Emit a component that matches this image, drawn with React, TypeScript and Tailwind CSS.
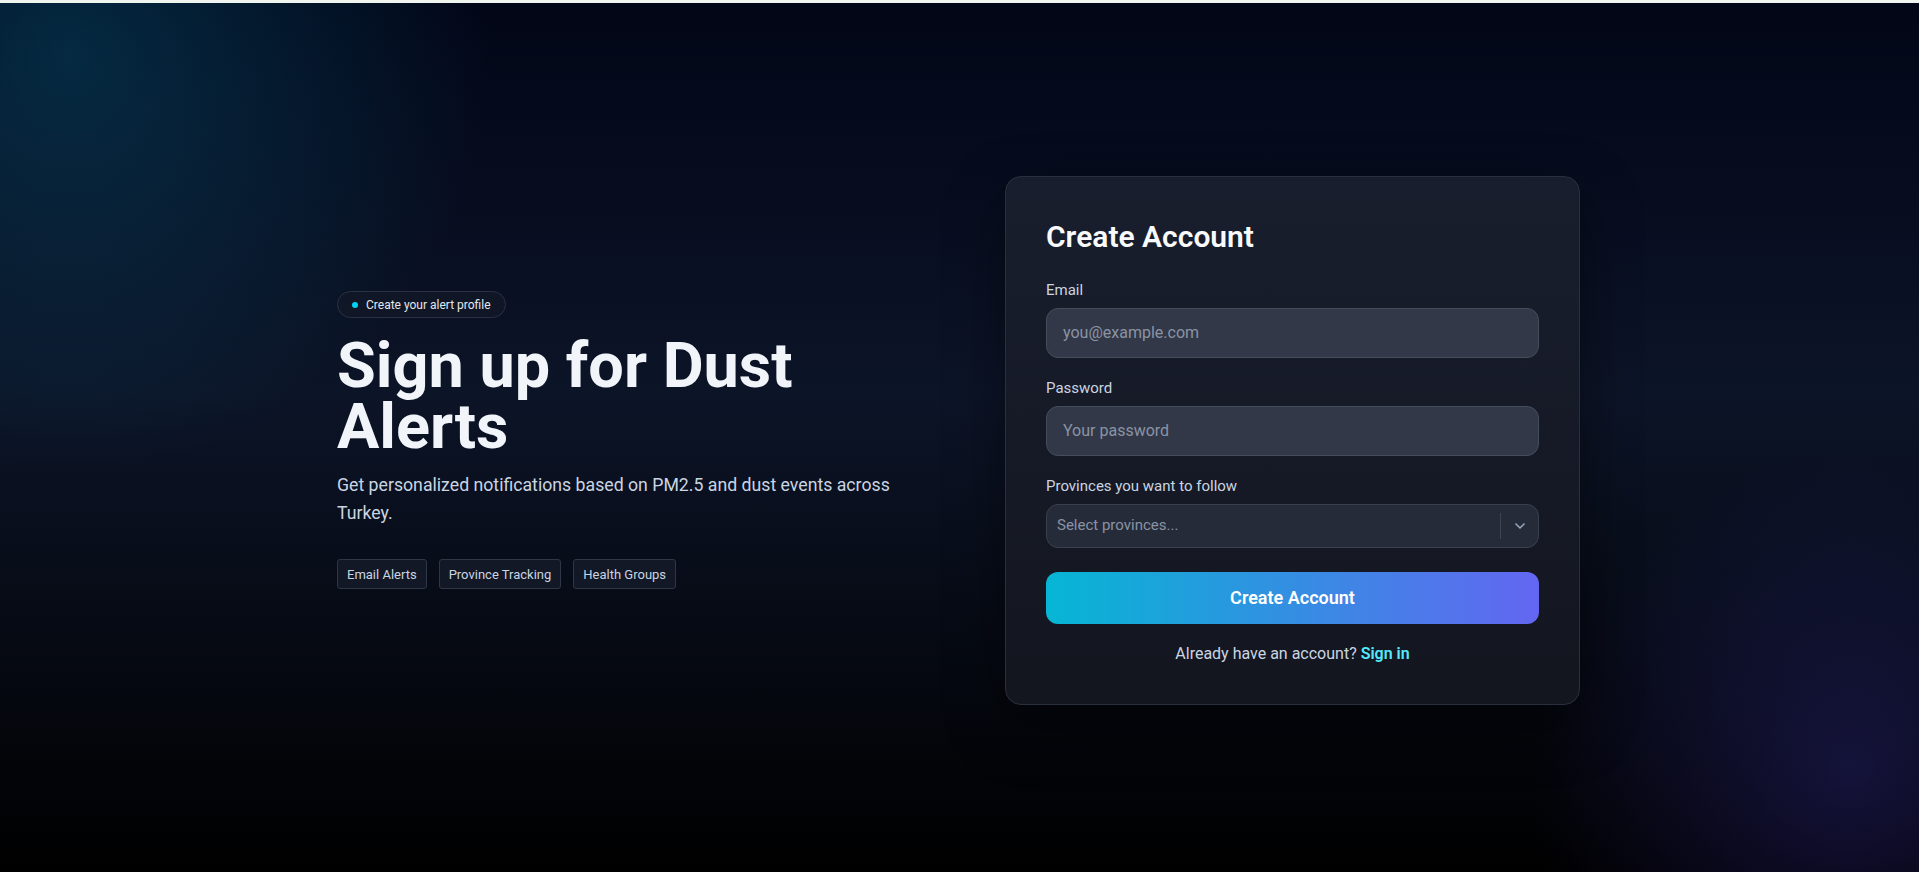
import { ChevronDown } from "lucide-react";

const tags = ["Email Alerts", "Province Tracking", "Health Groups"];

function Field({ label, placeholder, type = "text" }: { label: string; placeholder: string; type?: string }) {
  return (
    <div>
      <label className="block text-[15px] leading-5 text-slate-300 mb-2">{label}</label>
      <input
        type={type}
        placeholder={placeholder}
        className="w-full h-[50px] rounded-xl border border-[#454c5c] bg-[#323847] px-4 text-base text-slate-100 placeholder:text-[#8a93a5] outline-none"
      />
    </div>
  );
}

export default function App() {
  return (
    <div className="font-['Segoe_UI',Roboto,sans-serif]">
      <div className="h-[3px] bg-[#f1f5f0]" />
      <main className="min-h-[869px] pt-[5px] flex items-center justify-center bg-[radial-gradient(420px_circle_at_70px_50px,rgba(8,120,160,0.3),transparent),radial-gradient(320px_circle_at_1850px_770px,rgba(70,60,200,0.26),transparent),linear-gradient(180deg,#020617_0%,#0c1427_45%,#000000_100%)]">
        <div className="w-[1243px] mr-[2px] flex items-center justify-between">
          <section className="w-[570px]">
            <span className="inline-flex items-center gap-2 h-[27px] px-3.5 rounded-full border border-[#2a3242] bg-[#111827]/80 text-xs text-slate-200">
              <span className="w-[6px] h-[6px] rounded-full bg-cyan-400" />
              Create your alert profile
            </span>
            <h1 className="mt-[17px] w-[540px] text-[63px] leading-[61px] font-bold text-slate-100">
              Sign up for Dust Alerts
            </h1>
            <p className="mt-[14px] w-[570px] text-[17.7px] leading-7 text-slate-300">
              Get personalized notifications based on PM2.5 and dust events across Turkey.
            </p>
            <div className="mt-[32px] flex gap-3">
              {tags.map((t) => (
                <span
                  key={t}
                  className="h-[30px] px-[9px] flex items-center rounded-[3px] border border-[#2f3645] bg-[#121826] text-[13px] text-slate-300"
                >
                  {t}
                </span>
              ))}
            </div>
          </section>

          <section className="w-[575px] rounded-2xl border border-[#2a2f3e] bg-[linear-gradient(180deg,#191e2e,#13161f)] px-10 pt-[42px] pb-[38px] shadow-[0_20px_60px_rgba(0,0,0,0.45)]">
            <h2 className="text-[30px] leading-9 font-semibold text-slate-50 mb-[25px]">Create Account</h2>
            <div className="flex flex-col gap-5">
              <Field label="Email" placeholder="you@example.com" type="email" />
              <Field label="Password" placeholder="Your password" type="password" />
              <div>
                <label className="block text-[15px] leading-5 text-slate-300 mb-2">Provinces you want to follow</label>
                <div className="h-[44px] flex items-center rounded-xl border border-[#3a404f] bg-[#262b39]">
                  <span className="flex-1 pl-[10px] text-[15px] text-[#8a93a5]">Select provinces...</span>
                  <span className="w-px h-[26px] bg-[#3d4454]" />
                  <span className="w-[37px] flex justify-center text-[#94a3b8]">
                    <ChevronDown size={16} strokeWidth={2.5} />
                  </span>
                </div>
              </div>
            </div>
            <button className="mt-6 w-full h-[52px] rounded-xl bg-[linear-gradient(90deg,#06b6d4,#6366f1)] text-lg font-semibold text-white">
              Create Account
            </button>
            <p className="mt-[18px] text-center text-base leading-6 text-slate-300">
              Already have an account? <a className="font-semibold text-cyan-300">Sign in</a>
            </p>
          </section>
        </div>
      </main>
    </div>
  );
}
